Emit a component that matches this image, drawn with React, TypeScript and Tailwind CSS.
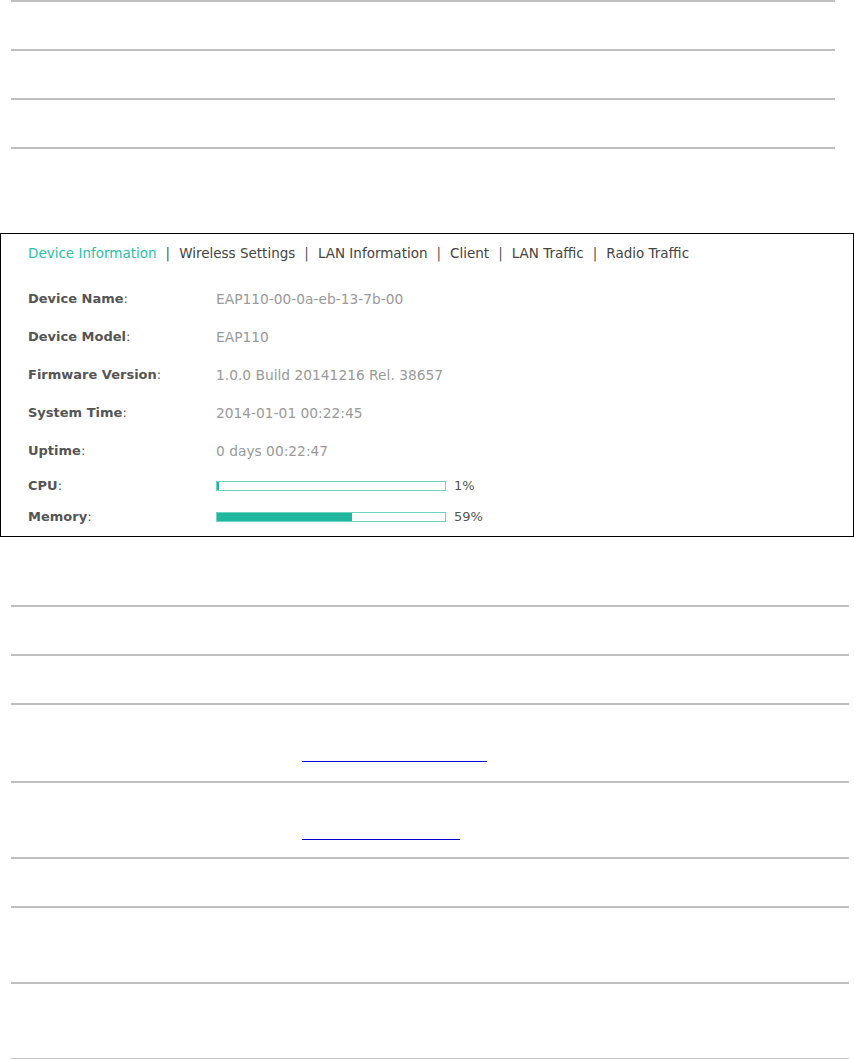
import React from "react";

const tabs = [
  "Device Information",
  "Wireless Settings",
  "LAN Information",
  "Client",
  "LAN Traffic",
  "Radio Traffic",
];

const info = [
  { label: "Device Name", value: "EAP110-00-0a-eb-13-7b-00" },
  { label: "Device Model", value: "EAP110" },
  { label: "Firmware Version", value: "1.0.0 Build 20141216 Rel. 38657" },
  { label: "System Time", value: "2014-01-01 00:22:45" },
  { label: "Uptime", value: "0 days 00:22:47" },
];

function Label({ text }: { text: string }) {
  return (
    <div className="w-[188px] shrink-0 text-[#555] text-[13px]">
      <span className="font-bold">{text}</span>:
    </div>
  );
}

function Bar({ label, pct }: { label: string; pct: number }) {
  return (
    <div className="flex items-center h-[20px]">
      <Label text={label} />
      <div className="w-[230px] h-[10px] border border-[#6fd3c1] bg-white">
        <div className="h-full bg-[#1fb89f]" style={{ width: `${pct}%` }} />
      </div>
      <span className="ml-[8px] text-[#555] text-[13px]">{pct}%</span>
    </div>
  );
}

export default function App() {
  const lower = [49, 49, 78, 76, 49, 76, 76];
  return (
    <div
      className="w-[854px] h-[1059px] bg-white overflow-hidden text-[13.5px]"
      style={{ fontFamily: '"DejaVu Sans", Verdana, sans-serif' }}
    >
      <div className="ml-[11px] w-[824px]">
        {[0, 1, 2].map((i) => (
          <div key={i} className="h-[49px] border-t-2 border-[#bfbfbf]" />
        ))}
        <div className="border-t-2 border-[#bfbfbf]" />
      </div>

      <div className="mt-[84px] w-[854px] h-[304px] border border-black pl-[27px] pt-[10px]">
        <div className="flex items-center h-[18px] text-[#444]">
          {tabs.map((t, i) => (
            <span key={t} className="flex items-center">
              {i > 0 && <span className="mx-[9px] text-[#555]">|</span>}
              <span className={i === 0 ? "text-[#2bbfa5]" : ""}>{t}</span>
            </span>
          ))}
        </div>
        <div className="mt-[18px] flex flex-col">
          {info.map((r) => (
            <div key={r.label} className="flex items-center h-[38px]">
              <Label text={r.label} />
              <span className="text-[#9a9a9a] text-[13.8px]">{r.value}</span>
            </div>
          ))}
        </div>
        <div className="mt-[6px] flex flex-col gap-[11px]">
          <Bar label="CPU" pct={1} />
          <Bar label="Memory" pct={59} />
        </div>
      </div>

      <div className="mt-[68px] ml-[11px] w-[838px]">
        {lower.map((h, i) => (
          <div
            key={i}
            className="border-t-2 border-[#bfbfbf] flex flex-col justify-end"
            style={{ height: h }}
          >
            {i === 2 && (
              <div className="ml-[291px] mb-[19px] w-[185px] border-b border-[#0000cc]" />
            )}
            {i === 3 && (
              <div className="ml-[291px] mb-[17px] w-[158px] border-b border-[#0000cc]" />
            )}
          </div>
        ))}
        <div className="border-t-2 border-[#bfbfbf]" />
      </div>
    </div>
  );
}
